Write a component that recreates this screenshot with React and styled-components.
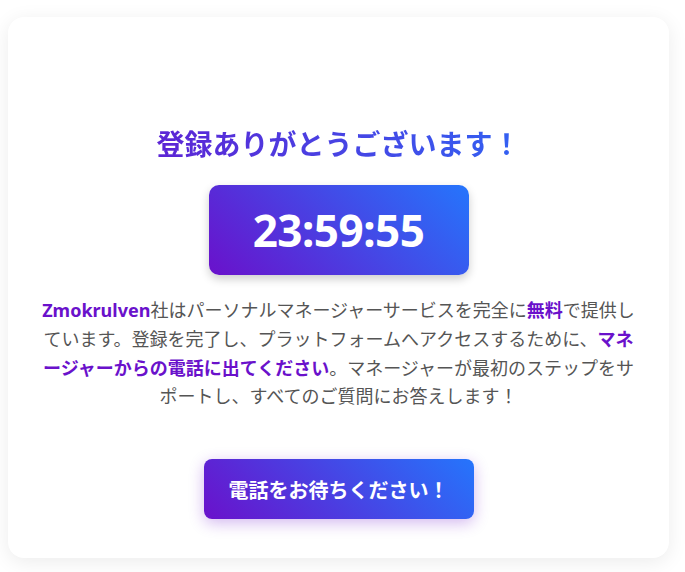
import React from "react"
import styled, { createGlobalStyle } from "styled-components"

const GlobalStyle = createGlobalStyle`
  body {
    margin: 0;
    background: #ffffff;
    font-family: "Noto Sans", "Noto Sans CJK JP", sans-serif;
  }
`

const Page = styled.div`
  padding: 17px 16px 14px 8px;
`

const Card = styled.div`
  background: #fff;
  border-radius: 16px;
  box-shadow: 0 4px 20px rgba(0, 0, 0, 0.08);
  padding: 110px 30px 39px;
  display: flex;
  flex-direction: column;
  align-items: center;
  text-align: center;
`

const Title = styled.h1`
  align-self: stretch;
  margin: 0;
  font-size: 28px;
  line-height: 34px;
  font-weight: 700;
  background: linear-gradient(90deg, #6a11cb, #2575fc);
  -webkit-background-clip: text;
  background-clip: text;
  color: transparent;
`

const Timer = styled.div`
  margin-top: 24px;
  height: 90px;
  width: 260px;
  box-sizing: border-box;
  display: flex;
  align-items: center;
  justify-content: center;
  border-radius: 10px;
  background: linear-gradient(45deg, #6a11cb, #2575fc);
  box-shadow: 0 4px 10px rgba(0, 0, 0, 0.2);
  color: #fff;
  font-size: 44px;
  font-weight: 700;
  letter-spacing: -0.5px;
`

const Text = styled.p`
  margin: 21px 0 0;
  font-size: 18px;
  line-height: 28.8px;
  color: #555;
`

const Mark = styled.strong`
  color: #6a11cb;
  font-weight: 700;
`

const CallButton = styled.button`
  margin-top: 48px;
  height: 60px;
  padding: 0 25px;
  border: none;
  border-radius: 8px;
  background: linear-gradient(45deg, #6a11cb, #2575fc);
  box-shadow: 0 4px 15px rgba(106, 17, 203, 0.3);
  color: #fff;
  font-family: inherit;
  font-size: 20px;
  font-weight: 700;
  cursor: pointer;
`

const App = () => (
  <>
    <GlobalStyle />
    <Page>
      <Card>
        <Title>登録ありがとうございます！</Title>
        <Timer>23:59:55</Timer>
        <Text>
          <Mark>Zmokrulven</Mark>社はパーソナルマネージャーサービスを完全に<Mark>無料</Mark>で提供しています。登録を完了し、プラットフォームへアクセスするために、<Mark>マネージャーからの電話に出てください</Mark>。マネージャーが最初のステップをサポートし、すべてのご質問にお答えします！
        </Text>
        <CallButton>電話をお待ちください！</CallButton>
      </Card>
    </Page>
  </>
)

export default App
